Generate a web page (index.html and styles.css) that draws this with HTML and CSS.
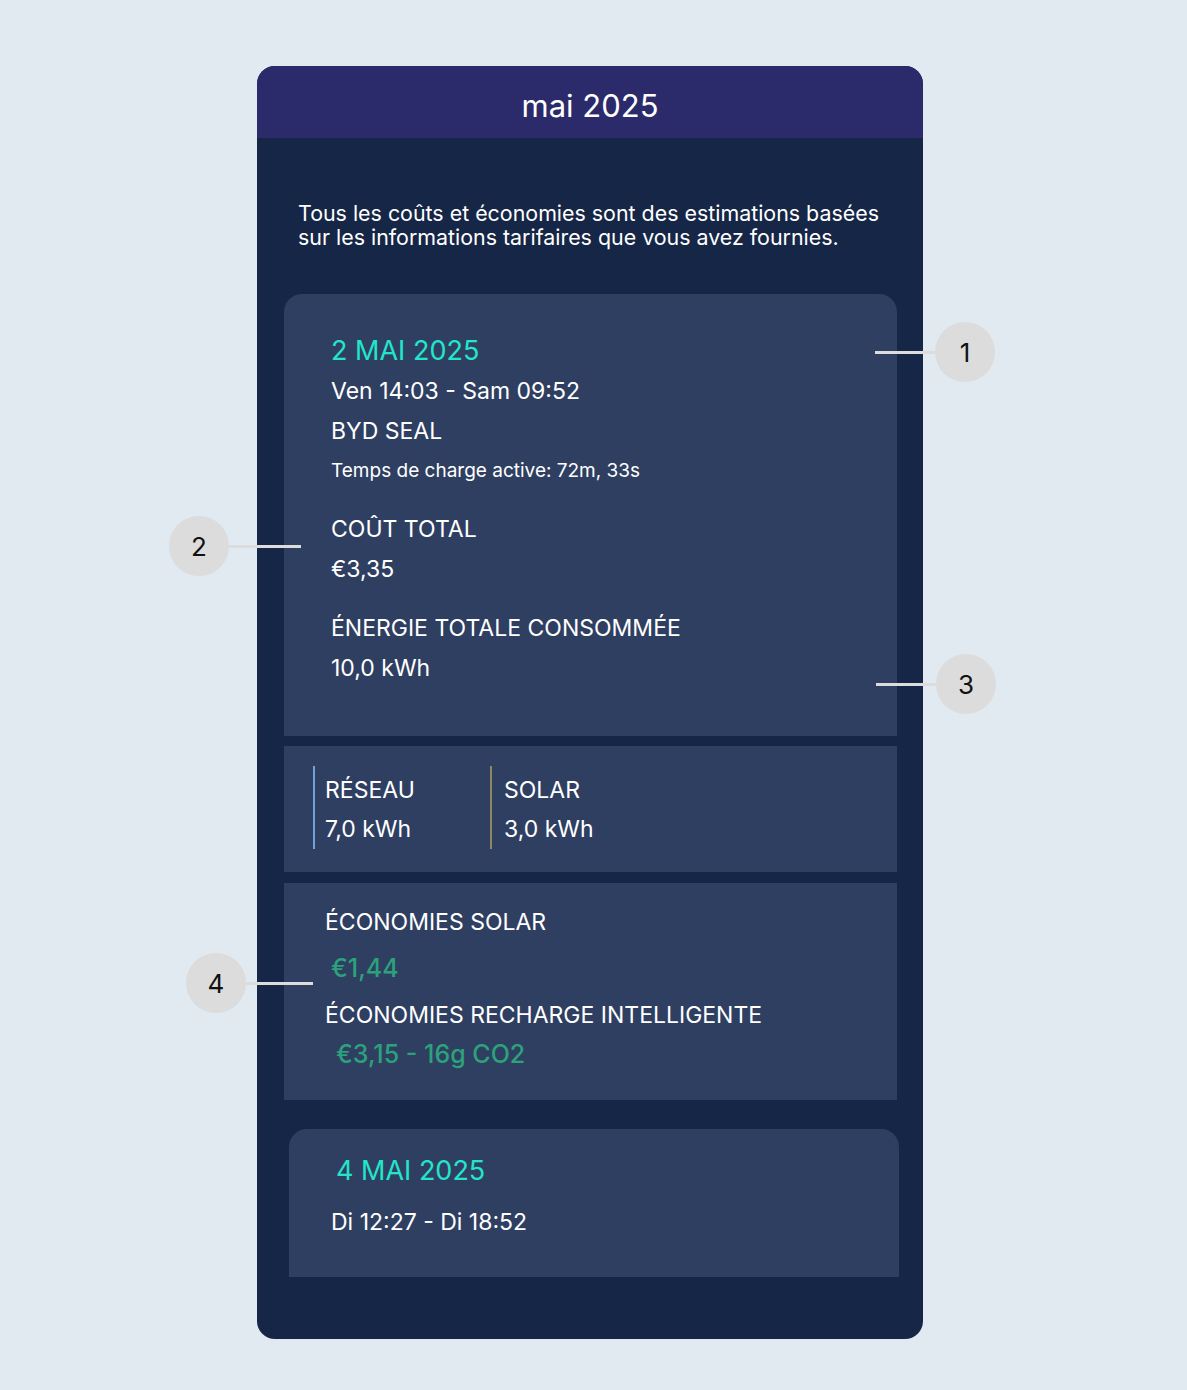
FILE: index.html
```html
<!DOCTYPE html>
<html lang="fr">
<head>
	<meta charset="UTF-8">
	<title>Historique de charge</title>
	<link rel="stylesheet" href="styles.css">
</head>
<body>
	<div class="wrap">
		<div class="panel">
			<div class="head">mai 2025</div>
			<div class="body">
				<p class="intro">Tous les coûts et économies sont des estimations basées sur les informations tarifaires que vous avez fournies.</p>

				<div class="card first">
					<p class="date">2 MAI 2025</p>
					<p class="row">Ven 14:03 - Sam 09:52</p>
					<p class="row">BYD SEAL</p>
					<p class="row small">Temps de charge active: 72m, 33s</p>
					<p class="row gap">COÛT TOTAL</p>
					<p class="row">€3,35</p>
					<p class="row gap">ÉNERGIE TOTALE CONSOMMÉE</p>
					<p class="row">10,0 kWh</p>
				</div>

				<div class="card split">
					<div class="src grid">
						<p>RÉSEAU</p>
						<p>7,0 kWh</p>
					</div>
					<div class="src sun">
						<p>SOLAR</p>
						<p>3,0 kWh</p>
					</div>
				</div>

				<div class="card saves">
					<p class="row">ÉCONOMIES SOLAR</p>
					<p class="row green g1">€1,44</p>
					<p class="row">ÉCONOMIES RECHARGE INTELLIGENTE</p>
					<p class="row green g2">€3,15 - 16g CO2</p>
				</div>

				<div class="card next">
					<p class="date">4 MAI 2025</p>
					<p class="row">Di 12:27 - Di 18:52</p>
				</div>
			</div>
		</div>

		<div class="callout c1"><span class="line"></span><span class="dot">1</span></div>
		<div class="callout c2"><span class="dot">2</span><span class="line"></span></div>
		<div class="callout c3"><span class="line"></span><span class="dot">3</span></div>
		<div class="callout c4"><span class="dot">4</span><span class="line"></span></div>
	</div>
</body>
</html>
```

FILE: styles.css
```css
*{margin: 0;padding: 0;box-sizing: border-box;}
body{background: #e1e9f1;font-family: Inter, Roboto, "Liberation Sans", sans-serif;color: #fff;}

.wrap{position: relative;width: 666px;margin: 66px 0 0 257px;}
.panel{background: #162646;border-radius: 18px;overflow: hidden;padding-bottom: 62px;}
.head{height: 72px;background: #2b2a6b;text-align: center;font-size: 31px;line-height: 80px;}

.body{padding-top: 63px;}
.intro{margin: 0 20px 45px 41px;font-size: 21.4px;line-height: 24px;}

.card{background: #2f3f62;margin: 0 26px 10px 27px;}
.row, .date{line-height: 40px;font-size: 23px;height: 40px;}
.date{color: #22e5c9;font-size: 27px;}
.small{font-size: 19px;height: 39px;line-height: 39px;}
.gap{margin-top: 19px;}

.first{border-radius: 18px 18px 0 0;padding: 37px 20px 48px 47px;}

.split{display: flex;padding: 20px 20px 23px 29px;}
.src{height: 83px;padding: 5px 0 0 10px;border-left: 2px solid #6fa3dc;width: 177px;}
.src p{font-size: 23px;line-height: 39px;height: 39px;}
.sun{border-left-color: #8e8a5c;width: auto;padding-left: 12px;}

.saves{margin-top: 11px;padding: 19px 20px 26px 41px;margin-bottom: 0;}
.saves .green{color: #2ba27b;font-size: 25px;font-weight: 500;margin-top: 6px;}
.saves .g1{padding-left: 6px;}
.saves .g2{padding-left: 11px;margin-top: -1px;}
.saves .row:nth-child(3){margin-top: 7px;}

.next{margin: 29px 24px 0 32px;border-radius: 18px 18px 0 0;padding: 22px 20px 35px 42px;}
.next .date{padding-left: 5px;}
.next .row{margin-top: 11px;}

.callout{position: absolute;display: flex;align-items: center;height: 60px;}
.dot{width: 60px;height: 60px;border-radius: 50%;background: #dcdcdc;color: #111;font-size: 26px;display: flex;align-items: center;justify-content: center;}
.line{height: 3px;background: #dcdcdc;}
.c1{left: 618px;top: 256px;}
.c1 .line{width: 60px;}
.c2{left: -88px;top: 450px;}
.c2 .line{width: 72px;}
.c3{left: 619px;top: 588px;}
.c3 .line{width: 60px;}
.c4{left: -71px;top: 887px;}
.c4 .line{width: 67px;}
```
